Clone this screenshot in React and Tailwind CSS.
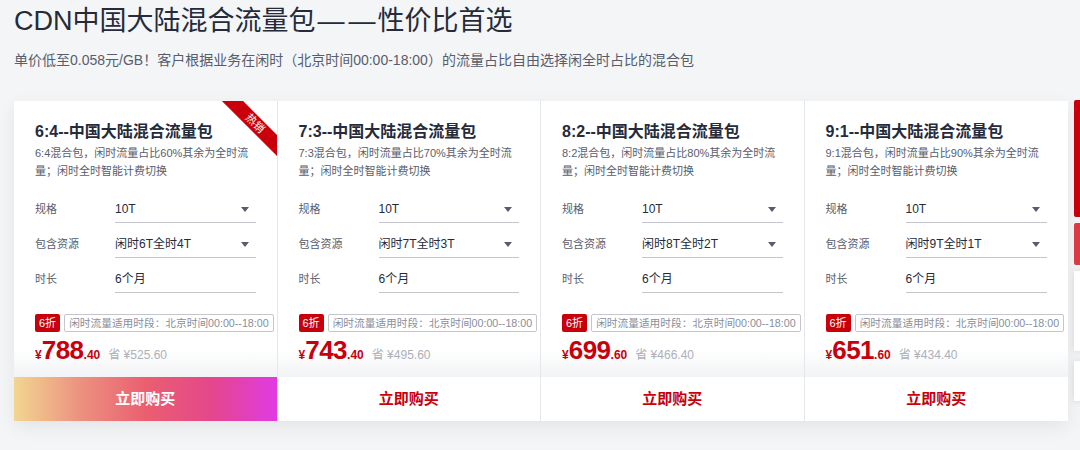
import React from 'react'

const plans = [
  { ratio: '6:4', pct: '60%', res: '闲时6T全时4T', price: '788', cents: '.40', save: '¥525.60', hot: true },
  { ratio: '7:3', pct: '70%', res: '闲时7T全时3T', price: '743', cents: '.40', save: '¥495.60' },
  { ratio: '8:2', pct: '80%', res: '闲时8T全时2T', price: '699', cents: '.60', save: '¥466.40' },
  { ratio: '9:1', pct: '90%', res: '闲时9T全时1T', price: '651', cents: '.60', save: '¥434.40' },
]

const Caret = () => (
  <svg width="8" height="5" viewBox="0 0 8 5" className="mr-[7px]">
    <path d="M0 0h8L4 5z" fill="#575d6c" />
  </svg>
)

const Field = ({ label, value, select }) => (
  <div className="flex items-center">
    <span className="w-[80px] text-[11px] text-[#575d6c]">{label}</span>
    <div className="flex h-[27px] flex-1 items-center justify-between border-b border-[#c4c6cc]">
      <span className="text-[12px] text-[#252b3a]">{value}</span>
      {select && <Caret />}
    </div>
  </div>
)

const PlanCard = ({ plan, last }) => (
  <div className={`relative flex flex-col overflow-hidden ${last ? '' : 'border-r border-[#e6e7ea]'}`}>
    {plan.hot && (
      <div className="absolute top-[15px] right-[-18px] flex h-[15px] w-[80px] rotate-45 items-center justify-center bg-[#c7000b] text-[11px] text-white">
        热销
      </div>
    )}
    <div className="h-[276px] bg-[linear-gradient(180deg,#ffffff_0%,#ffffff_90%,#f2f3f5_100%)] pt-[19px] pr-[21px] pl-[21px]">
      <h3 className="text-[16px] leading-[24px] font-bold text-[#252b3a]">{plan.ratio}--中国大陆混合流量包</h3>
      <p className="text-[11px] leading-[18px] text-[#575d6c]">
        <span className="block">{plan.ratio}混合包，闲时流量占比{plan.pct}其余为全时流</span>
        <span className="block">量；闲时全时智能计费切换</span>
      </p>
      <div className="mt-[16px] flex flex-col gap-[8px]">
        <Field label="规格" value="10T" select />
        <Field label="包含资源" value={plan.res} select />
        <Field label="时长" value="6个月" />
      </div>
      <div className="mt-[21px] flex items-center gap-[4px] whitespace-nowrap">
        <span className="flex h-[18px] items-center rounded-[2px] bg-[#c7000b] px-[4px] text-[11px] text-white">6折</span>
        <span className="flex h-[18px] items-center rounded-[2px] border border-[#c4c6cc] px-[4px] text-[10.7px] text-[#8a8e99]">
          闲时流量适用时段：北京时间00:00--18:00
        </span>
      </div>
      <div className="mt-[4px] flex items-baseline leading-[28px] font-bold text-[#c7000b]">
        <span className="text-[12px]">¥</span>
        <span className="text-[26px] tracking-[-0.5px]">{plan.price}</span>
        <span className="text-[12px]">{plan.cents}</span>
        <span className="ml-[8px] text-[12px] font-normal text-[#adb0b8]">省 {plan.save}</span>
      </div>
    </div>
    <button
      className={`h-[44px] w-full text-[15px] font-bold ${
        plan.hot
          ? 'bg-[linear-gradient(90deg,#f2d690_0%,#ec9280_25%,#ea5f70_50%,#e4478a_75%,#e13ae3_100%)] text-white'
          : 'bg-white text-[#c7000b]'
      }`}
    >
      立即购买
    </button>
  </div>
)

export default function App() {
  return (
    <div
      className="relative h-[450px] w-[1080px] overflow-hidden bg-[#f4f5f7] px-[14px] pt-[3px]"
      style={{ fontFamily: '"Liberation Sans", "Noto Sans CJK SC", sans-serif' }}
    >
      <h1 className="text-[27px] leading-[36px] text-[#252b3a]">
        CDN中国大陆混合流量包
        <span className="mx-[2px] inline-flex gap-[4px]">
          <span>—</span>
          <span>—</span>
        </span>
        性价比首选
      </h1>
      <p className="mt-[11px] text-[14px] leading-[20px] text-[#575d6c]">
        单价低至0.058元/GB！客户根据业务在闲时（北京时间00:00-18:00）的流量占比自由选择闲全时占比的混合包
      </p>
      <div className="mt-[31px] grid w-[1054px] grid-cols-4 bg-white shadow-[0_6px_18px_rgba(0,0,0,0.07)]">
        {plans.map((p, i) => (
          <PlanCard key={p.ratio} plan={p} last={i === plans.length - 1} />
        ))}
      </div>

      {/* floating side toolbar, clipped by the window */}
      <div className="absolute top-[100px] left-[1074px] flex w-[40px] flex-col gap-[6px]">
        <div className="h-[117px] rounded-l-[2px] bg-[#c7000b]" />
        <div className="h-[42px] rounded-l-[2px] bg-[#d93a44]" />
        <div className="h-[80px] bg-white shadow-[0_0_6px_rgba(0,0,0,0.12)]" />
        <div className="mt-[4px] h-[40px] bg-white shadow-[0_0_6px_rgba(0,0,0,0.12)]" />
      </div>
    </div>
  )
}
